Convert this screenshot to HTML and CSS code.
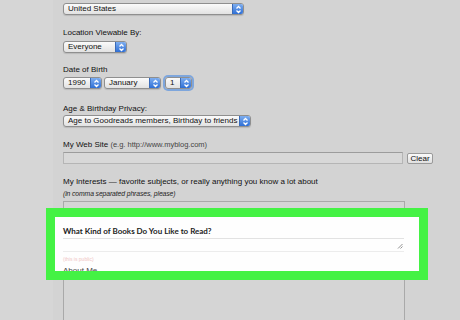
FILE: index.html
```html
<!DOCTYPE html>
<html lang="en">
<head>
  <meta charset="UTF-8">
  <title>Edit Profile</title>
  <link rel="stylesheet" href="styles.css">
</head>
<body>

<div class="page">
  <div class="side"></div>

  <div class="form">
    <div class="select country">
      <span class="value">United States</span>
      <span class="arrows"><svg width="7" height="9" viewBox="0 0 7 9"><polyline points="1.5,3.5 3.5,1.5 5.5,3.5"/><polyline points="1.5,5.5 3.5,7.5 5.5,5.5"/></svg></span>
    </div>

    <div class="label location">Location Viewable By:</div>
    <div class="select everyone">
      <span class="value">Everyone</span>
      <span class="arrows"><svg width="7" height="9" viewBox="0 0 7 9"><polyline points="1.5,3.5 3.5,1.5 5.5,3.5"/><polyline points="1.5,5.5 3.5,7.5 5.5,5.5"/></svg></span>
    </div>

    <div class="label birth">Date of Birth</div>
    <div class="row">
      <div class="select year">
        <span class="value">1990</span>
        <span class="arrows"><svg width="7" height="9" viewBox="0 0 7 9"><polyline points="1.5,3.5 3.5,1.5 5.5,3.5"/><polyline points="1.5,5.5 3.5,7.5 5.5,5.5"/></svg></span>
      </div>
      <div class="select month">
        <span class="value">January</span>
        <span class="arrows"><svg width="7" height="9" viewBox="0 0 7 9"><polyline points="1.5,3.5 3.5,1.5 5.5,3.5"/><polyline points="1.5,5.5 3.5,7.5 5.5,5.5"/></svg></span>
      </div>
      <div class="select day focused">
        <span class="value">1</span>
        <span class="arrows"><svg width="7" height="9" viewBox="0 0 7 9"><polyline points="1.5,3.5 3.5,1.5 5.5,3.5"/><polyline points="1.5,5.5 3.5,7.5 5.5,5.5"/></svg></span>
      </div>
    </div>

    <div class="label privacy">Age &amp; Birthday Privacy:</div>
    <div class="select age">
      <span class="value">Age to Goodreads members, Birthday to friends</span>
      <span class="arrows"><svg width="7" height="9" viewBox="0 0 7 9"><polyline points="1.5,3.5 3.5,1.5 5.5,3.5"/><polyline points="1.5,5.5 3.5,7.5 5.5,5.5"/></svg></span>
    </div>

    <div class="label website">My Web Site <span class="example">(e.g. http://www.myblog.com)</span></div>
    <div class="row">
      <div class="text-input"></div>
      <div class="button">Clear</div>
    </div>

    <div class="label interests">My Interests &mdash; favorite subjects, or really anything you know a lot about</div>
    <div class="hint">(in comma separated phrases, please)</div>
    <div class="textarea"></div>
  </div>

  <!-- highlighted field -->
  <div class="highlight">
    <div class="hl-label">What Kind of Books Do You Like to Read?</div>
    <div class="hl-textarea">
      <svg class="grip" width="6" height="6" viewBox="0 0 6 6"><line x1="1" y1="5.5" x2="5.5" y2="1"/><line x1="3.5" y1="5.5" x2="5.5" y2="3.5"/></svg>
    </div>
    <div class="hl-note">(this is public)</div>
    <div class="hl-next">About Me</div>
  </div>
</div>

</body>
</html>
```

FILE: styles.css
```css
body {
  margin: 0;
  background: #d3d3d3;
  font-family: "Liberation Sans", Arial, sans-serif;
  font-size: 8px;
  color: #111;
}
.page {
  position: relative;
  width: 460px;
  height: 320px;
  overflow: hidden;
  display: flex;
  align-items: flex-start;
}
.side {
  width: 53px;
  height: 320px;
  flex-shrink: 0;
  background: #d6d6d6;
}
.form {
  padding: 3px 0 0 10px;
  display: flex;
  flex-direction: column;
  align-items: flex-start;
}
.form > * {
  flex-shrink: 0;
}
.label {
  line-height: 10px;
  height: 10px;
  white-space: nowrap;
}
.label.location { margin-top: 13px; margin-bottom: 3px; }
.label.birth { margin-top: 12px; margin-bottom: 2px; }
.label.privacy { margin-top: 15px; margin-bottom: 1px; }
.label.website { margin-top: 13px; margin-bottom: 2px; }
.label.interests { margin-top: 13px; }
.example {
  color: #444;
  font-size: 7.5px;
}
.hint {
  font-style: italic;
  font-size: 6.8px;
  line-height: 10px;
  color: #222;
  margin-top: 2px;
  letter-spacing: -0.1px;
}
.row {
  display: flex;
  gap: 2px;
}
.select {
  height: 12px;
  box-sizing: border-box;
  display: flex;
  border: 1px solid #8f8f8f;
  border-radius: 3px;
  background: linear-gradient(#fbfbfb, #e2e2e2);
  box-shadow: 0 1px 1px rgba(0,0,0,0.12);
  overflow: hidden;
}
.select .value {
  flex: 1;
  padding-left: 4px;
  line-height: 10px;
  white-space: nowrap;
}
.select .arrows {
  width: 10px;
  flex-shrink: 0;
  display: flex;
  align-items: center;
  justify-content: center;
  background: linear-gradient(#7eaef0, #2e6fd6);
  border-left: 1px solid #3a6bb8;
}
.select svg polyline {
  fill: none;
  stroke: #fff;
  stroke-width: 1.3;
}
.country { width: 181px; }
.everyone { width: 64px; }
.year { width: 39px; }
.month { width: 57px; }
.day {
  width: 27px;
  margin-left: 2px;
}
.focused {
  box-shadow: 0 0 0 2px #7ea6dc;
}
.age { width: 188px; }
.text-input {
  width: 340px;
  height: 12px;
  box-sizing: border-box;
  border: 1px solid #b5b5b5;
  border-top-color: #9c9c9c;
  background: #d8d8d8;
}
.button {
  margin-left: 2px;
  margin-top: 1px;
  width: 26px;
  height: 11px;
  box-sizing: border-box;
  border: 1px solid #9a9a9a;
  border-radius: 2px;
  background: linear-gradient(#fafafa, #e0e0e0);
  text-align: center;
  line-height: 9px;
  font-size: 8px;
}
.textarea {
  margin-top: 2px;
  width: 342px;
  height: 200px;
  box-sizing: border-box;
  border: 1px solid #a9a9a9;
  background: #d5d5d5;
}
.highlight {
  position: absolute;
  left: 46px;
  top: 208px;
  width: 364px;
  height: 54px;
  border: 9px solid #44f244;
  background: #fefefe;
  overflow: hidden;
}
.hl-label {
  margin: 9px 0 0 8px;
  font-family: "Lato", sans-serif;
  font-weight: 700;
  font-size: 8px;
  line-height: 10px;
  color: #1c1c1c;
}
.hl-textarea {
  margin: 2px 0 0 8px;
  width: 341px;
  height: 14px;
  box-sizing: border-box;
  border-top: 1px solid #e2e2e2;
  border-bottom: 1px solid #ececec;
  display: flex;
  justify-content: flex-end;
  align-items: flex-end;
}
.grip {
  margin: 0 1px 2px 0;
}
.grip line {
  stroke: #777;
  stroke-width: 0.8;
}
.hl-note {
  margin: 4px 0 0 8px;
  font-size: 5px;
  line-height: 6px;
  color: #f0c4c4;
}
.hl-next {
  margin: 4px 0 0 8px;
  font-size: 8px;
  line-height: 10px;
  color: #444;
}
```
